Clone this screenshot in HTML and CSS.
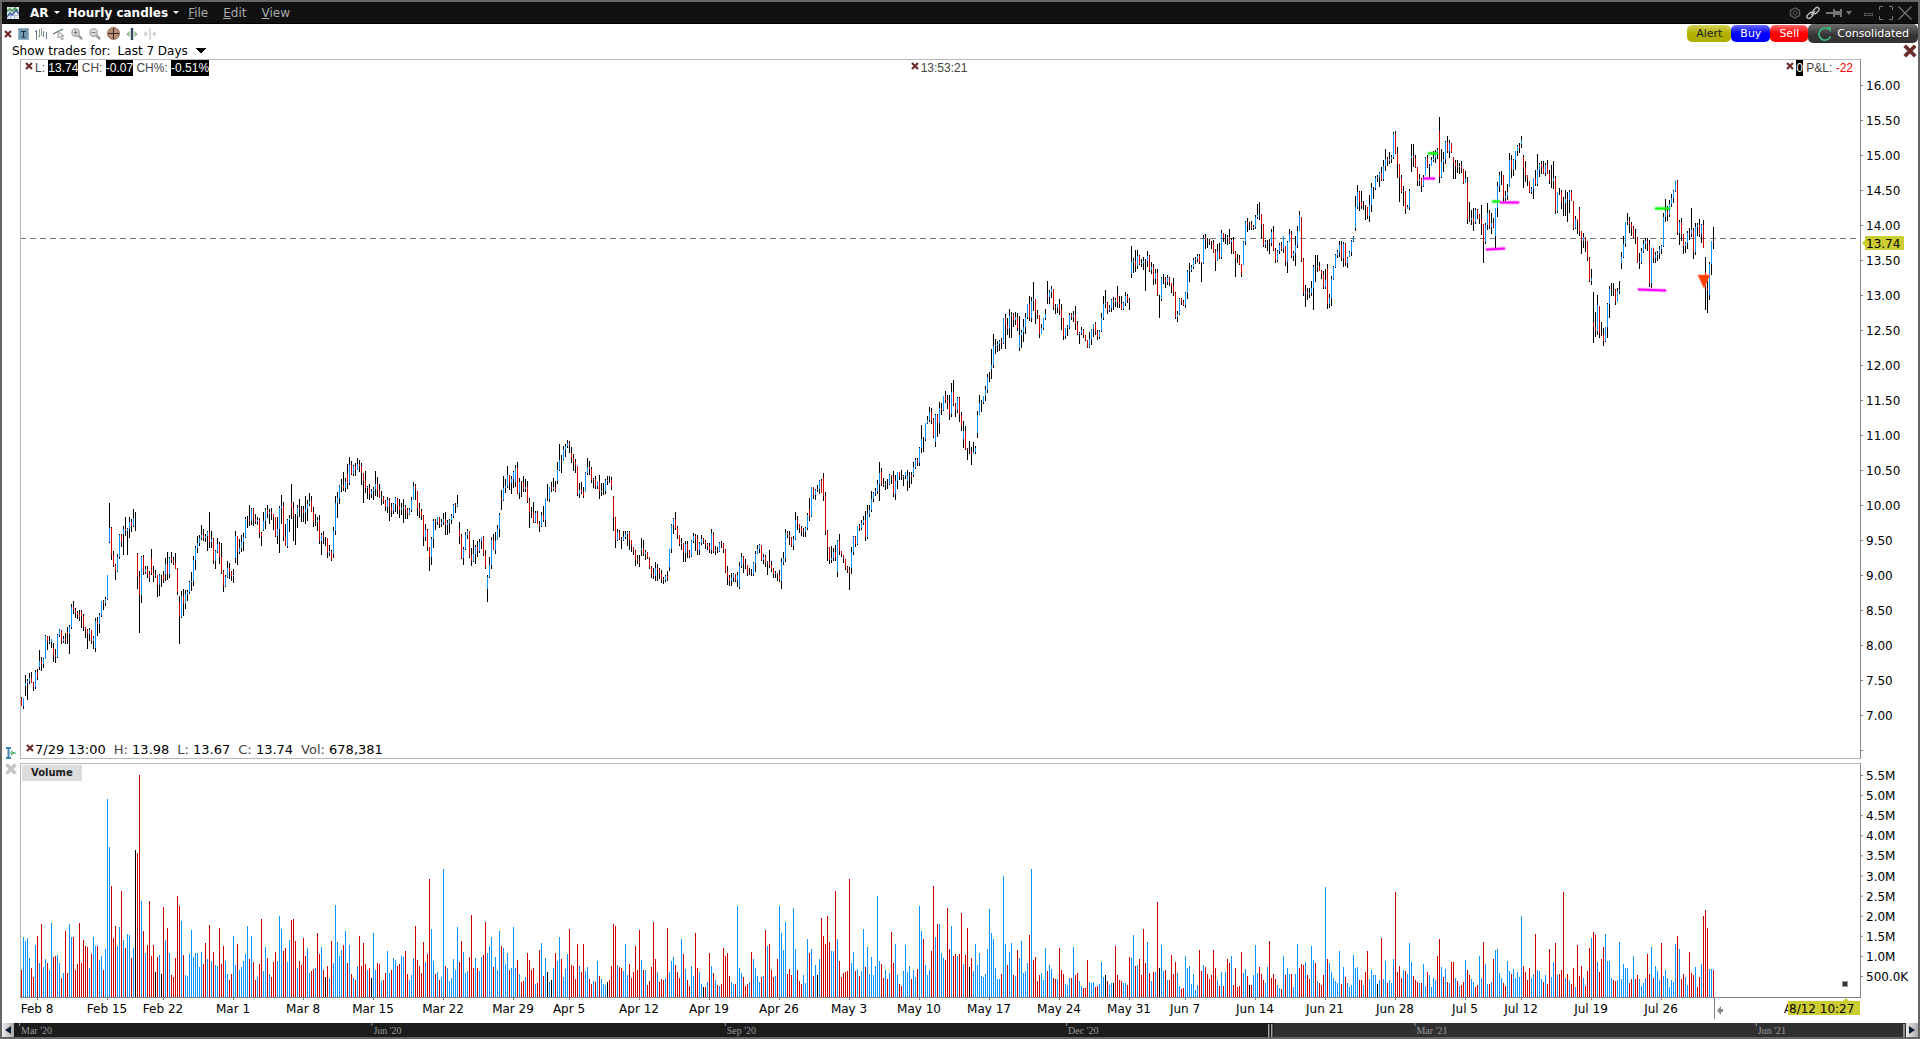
FILE: index.html
```
<!DOCTYPE html>
<html lang="en">
<head>
    <meta charset="UTF-8">
    <meta name="viewport" content="width=device-width, initial-scale=1.0">
    <title>AR - Hourly candles</title>
    <link rel="stylesheet" href="styles.css">
</head>
<body>
<header class="titlebar">
    <svg class="logo" width="12" height="12" viewBox="0 0 12 12">
        <rect width="12" height="12" fill="#e4e8f4"/>
        <path d="M3.5 0V12M7.5 0V12M0 4.5H12M0 8.5H12" stroke="#b4bcd8"/>
        <path d="M0 4L3 2L5 4L8 1L11 4" fill="none" stroke="#3a9c3a" stroke-width="1.5"/>
        <path d="M0 10L3 6L5 8L9 3L12 7" fill="none" stroke="#36589c" stroke-width="1.3"/>
    </svg>
    <button class="title-btn symbol">AR<span class="caret"></span></button>
    <button class="title-btn period">Hourly candles<span class="caret"></span></button>
    <nav class="menu">
        <a href="#"><u>F</u>ile</a>
        <a href="#"><u>E</u>dit</a>
        <a href="#"><u>V</u>iew</a>
    </nav>
    <div class="window-buttons">
        <button aria-label="Settings"><svg width="12" height="12" viewBox="0 0 12 12" fill="none" stroke="#555"><path d="M6 1L10.5 3.5V8.5L6 11L1.500 8.500V3.500Z" stroke-width="1.5"/><circle cx="6" cy="6" r="2"/></svg></button>
        <button aria-label="Link"><svg width="14" height="14" viewBox="0 0 14 14" fill="none" stroke="#bbb" stroke-width="1.400"><rect x="6.500" y="2.500" width="7" height="4" rx="2" transform="rotate(-45 10 4.500)"/><rect x=".5" y="7.500" width="7" height="4" rx="2" transform="rotate(-45 4 9.500)"/><path d="M5 9L9 5"/></svg></button>
        <button aria-label="Pin"><svg width="28" height="12" viewBox="0 0 28 12" fill="#777"><path d="M1 5H8V7H1ZM8 2H10V4H15V2H17V10H15V8H10V10H8Z"/><path d="M21 4H27L24 8Z"/></svg></button>
        <button aria-label="Minimize" class="minimize"><svg width="10" height="12" viewBox="0 0 10 12"><rect x=".5" y="6.500" width="8" height="2" fill="none" stroke="#555"/></svg></button>
        <button aria-label="Maximize"><svg width="14" height="14" viewBox="0 0 14 14"><path d="M.5 4V.5H4M10 .5H13.500V4M13.500 10V13.500H10M4 13.500H.5V10" fill="none" stroke="#777"/></svg></button>
        <button aria-label="Close window"><svg width="14" height="14" viewBox="0 0 14 14"><path d="M.5 .5L13.500 13.500M13.500 .5L.5 13.500" stroke="#777" stroke-width="1.200"/></svg></button>
    </div>
</header>

<svg class="defs" width="0" height="0" aria-hidden="true">
    <symbol id="x" viewBox="0 0 8 8"><path d="M1 1L7 7M7 1L1 7" stroke="currentColor" stroke-width="2.200"/></symbol>
</svg>

<div class="toolbar">
    <div class="tools">
        <button aria-label="Close toolbar"><svg class="x" width="8" height="8"><use href="#x"/></svg></button>
        <button aria-label="Text"><svg width="11" height="12" viewBox="0 0 11 12"><rect x=".5" y=".5" width="10" height="11" fill="#7098b0" stroke="#9cb4c4"/><path d="M3 3.500H8M5.500 3.500V9M4 9H7" stroke="#16303e" fill="none"/></svg></button>
        <button aria-label="Bars"><svg width="12" height="12" viewBox="0 0 12 12" fill="none"><path d="M1.500 2V12M8.500 3V9M11.500 4V11M0 3.500H2" stroke="#6c7c98"/><path d="M4.500 1V9M6.500 0V8M4 8.500H3" stroke="#84a884"/></svg></button>
        <button aria-label="Draw line"><svg width="12" height="12" viewBox="0 0 12 12"><path d="M0 6L10 1" stroke="#5c7474" stroke-width="1.300"/><path d="M5 3V10L7 8.500L9 12L10.500 11L8.500 8H11Z" fill="#e4e4e4" stroke="#8c8c8c" stroke-width=".8"/></svg></button>
        <button aria-label="Zoom in"><svg width="12" height="12" viewBox="0 0 13 13"><path d="M8 8L12 12" stroke="#999" stroke-width="2.500"/><circle cx="5" cy="5" r="4" fill="#ddd" stroke="#aaa" stroke-width="1.500"/><path d="M3 5H7M5 3V7" stroke="#666"/></svg></button>
        <button aria-label="Zoom out"><svg width="12" height="12" viewBox="0 0 13 13"><path d="M8 8L12 12" stroke="#999" stroke-width="2.500"/><circle cx="5" cy="5" r="4" fill="#ddd" stroke="#aaa" stroke-width="1.500"/><path d="M3 5H7" stroke="#666"/></svg></button>
        <button aria-label="Crosshair"><svg width="13" height="13" viewBox="0 0 13 13"><circle cx="6.500" cy="6.500" r="6" fill="#b89078" stroke="#94705c"/><path d="M6.500 1V12M1 6.500H12" stroke="#3c241c"/></svg></button>
        <button aria-label="Widen bars"><svg width="12" height="12" viewBox="0 0 12 12"><path d="M3.500 3V9L0 6ZM8.500 3V9L12 6Z" fill="#94b894"/><path d="M6 0V12" stroke="#344c58" stroke-width="2.500"/></svg></button>
        <button aria-label="Narrow bars"><svg width="12" height="12" viewBox="0 0 12 12"><path d="M.5 3L4 6L.5 9ZM11.500 3L8 6L11.500 9Z" fill="#ccc"/><path d="M6 0V12" stroke="#b4b4b4"/></svg></button>
    </div>
    <div class="orders">
        <button class="order alert">Alert</button>
        <button class="order buy">Buy</button>
        <button class="order sell">Sell</button>
        <button class="order consolidated">
            <svg width="16" height="16" viewBox="0 0 16 16"><path d="M13.500 10.500A6 6 0 1 1 11 3" fill="none" stroke="#3cb47c" stroke-width="1.800"/><path d="M9 1H14V6Z" fill="#3cb47c"/></svg>
            Consolidated
        </button>
    </div>
</div>

<div class="filter">
    <label for="trades">Show trades for:</label>
    <select id="trades">
        <option>Last 7 Days</option>
        <option>Last 30 Days</option>
    </select>
    <button class="close-chart" aria-label="Close chart"><svg class="x" width="14" height="14"><use href="#x"/></svg></button>
</div>

<main class="charts">
    <div class="gutter bottom">
        <svg width="10" height="12" viewBox="0 0 10 12"><path d="M0 1H5M0 11H5M2.500 1V11" stroke="#3c84b4" stroke-width="2"/><path d="M4 6H10M5 4L8 6L5 8" stroke="#2c9c5c" fill="none"/></svg>
    </div>
    <section class="panel price">
        <svg class="plot" viewBox="0 0 1839 698" preserveAspectRatio="none">
            <path d="M0 178.500H1839" stroke="#737373" stroke-dasharray="6 4" stroke-dashoffset="1"/>
            <g id="candles"></g>
            <g class="halo">
                <path class="green" d="M1408 93.500H1416M1472 141.500H1478M1635 148.500H1648"/>
                <path class="pink" d="M1403 118.500H1413M1466 189.500L1483 188.500M1480 142.500H1497M1618 229.500L1644 230.500"/>
            </g>
            <g class="trades">
                <path class="green" d="M1408 93.500H1416M1472 141.500H1478M1635 148.500H1648"/>
                <path class="pink" d="M1403 118.500H1413M1466 189.500L1483 188.500M1480 142.500H1497M1618 229.500L1644 230.500"/>
                <path d="M1677 215H1689L1683 228Z" fill="#ff3c00" stroke="#ff7c54" stroke-width=".6"/>
            </g>
        </svg>
        <div class="legend top">
            <p><svg class="x" width="8" height="8"><use href="#x"/></svg>L: <mark>13.74</mark> CH: <mark>-0.07</mark> CH%: <mark>-0.51%</mark></p>
            <p><svg class="x" width="8" height="8"><use href="#x"/></svg>13:53:21</p>
            <p><svg class="x" width="8" height="8"><use href="#x"/></svg><mark>0</mark> P&amp;L: <span class="loss">-22</span></p>
        </div>
        <div class="legend base">
            <svg class="x" width="8" height="8"><use href="#x"/></svg><b>7/29 13:00</b><span>H: <b>13.98</b></span><span>L: <b>13.67</b></span><span>C: <b>13.74</b></span><span>Vol: <b>678,381</b></span>
        </div>
    </section>
    <svg class="axis" id="priceAxis"></svg>

    <div class="gutter">
        <button aria-label="Close volume"><svg width="12" height="12" viewBox="0 0 8 8" color="#c4c4c4"><use href="#x"/></svg></button>
    </div>
    <section class="panel volume">
        <svg class="plot" viewBox="0 0 1839 233" preserveAspectRatio="none">
            <g id="volumes"></g>
            <rect x="1821.500" y="217.500" width="5" height="5" fill="#333" stroke="#999"/>
        </svg>
        <h2>Volume</h2>
    </section>
    <svg class="axis" id="volumeAxis"></svg>

    <svg class="dates" id="dateAxis"></svg>
</main>

<footer class="overview">
    <button aria-label="Scroll left"><svg width="12" height="12" viewBox="0 0 12 12"><path d="M3 6L9 2V10Z" fill="#0c1c34"/></svg></button>
    <svg class="range" id="range"></svg>
    <button aria-label="Scroll right"><svg width="12" height="12" viewBox="0 0 12 12"><path d="M9 6L3 2V10Z" fill="#0c1c34"/></svg></button>
</footer>

<script src="chart.js"></script>
</body>
</html>
```
FILE: styles.css
```
* {
    box-sizing: border-box;
}
body {
    margin: 0;
    height: 100vh;
    display: flex;
    flex-direction: column;
    border: 2px solid #666;
    background: #fff;
    color: #000;
    font-family: "DejaVu Sans", sans-serif;
    font-size: 12px;
    overflow: hidden;
}
button {
    display: flex;
    align-items: center;
    padding: 0;
    border: none;
    background: none;
    font: inherit;
    color: inherit;
    cursor: pointer;
}
svg {
    display: block;
}
.defs {
    position: absolute;
}
.x {
    color: #6c2c2c;
}

/* title bar */
.titlebar {
    display: flex;
    align-items: center;
    height: 22px;
    padding: 0 6px 0 5px;
    background: #111;
    border-bottom: 1px solid #000;
    color: #fff;
}
.title-btn {
    font-weight: bold;
}
.symbol {
    margin-left: 11px;
}
.period {
    margin-left: 8px;
}
.caret {
    margin-left: 5px;
    border: 3px solid transparent;
    border-top-color: #fff;
    border-bottom: none;
}
.menu {
    display: flex;
    gap: 15px;
    margin-left: 9px;
}
.menu a {
    color: #aaa;
    text-decoration: none;
}
.window-buttons {
    display: flex;
    align-items: center;
    gap: 5px;
    margin-left: auto;
}
.minimize {
    margin-left: 6px;
}

/* toolbar */
.toolbar {
    display: flex;
    justify-content: space-between;
    height: 19px;
    padding-left: 2px;
}
.tools,
.orders {
    display: flex;
    align-items: center;
}
.tools {
    gap: 6px;
}
.order {
    justify-content: center;
    height: 17px;
    padding: 0 9px;
    border-radius: 5px;
    color: #fff;
    font-size: 11px;
}
.alert {
    background: linear-gradient(#d4d45c, #b0b000 50%);
    color: #222;
}
.buy {
    background: linear-gradient(#6c6cff, #0000ff 50%);
}
.sell {
    background: linear-gradient(#ff6c6c, #ff0000 50%);
}
.consolidated {
    gap: 4px;
    height: 19px;
    background: linear-gradient(#707070, #333 60%);
}

/* trades filter */
.filter {
    display: flex;
    align-items: center;
    height: 16px;
    padding: 0 1px 0 10px;
}
select {
    width: 88px;
    margin-left: 7px;
    padding: 0;
    border: none;
    appearance: none;
    background: linear-gradient(to bottom right, #000 50%, transparent 50%) no-repeat 83px 4px / 5px 6px,
        linear-gradient(to bottom left, #000 50%, transparent 50%) no-repeat 78px 4px / 5px 6px;
    font: inherit;
}
.close-chart {
    margin-left: auto;
}

/* charts */
.charts {
    flex: 1;
    min-height: 0;
    display: grid;
    grid-template-columns: 18px 1fr 57px;
    grid-template-rows: minmax(0, 700fr) minmax(0, 235fr) 21px;
    row-gap: 4px;
}
.gutter {
    display: flex;
    justify-content: center;
    align-items: flex-start;
}
.gutter.bottom {
    align-items: flex-end;
}
.panel {
    position: relative;
    min-height: 0;
    border: 1px solid #b8b8b8;
    border-right-color: #888;
}
.volume {
    border-bottom-color: #808080;
}
.plot {
    width: 100%;
    height: 100%;
    shape-rendering: crispEdges;
}
.axis,
.dates {
    width: 100%;
    height: 100%;
    overflow: visible;
}
.dates {
    grid-column: 2;
    margin-top: -4px;
    height: 25px;
}
.tick {
    stroke: #808080;
}
.tag {
    fill: #cccc33;
}
.black {
    stroke: #000;
}
.blue {
    stroke: #0a94ff;
}
.red {
    stroke: #cc0000;
}
.trades,
.halo {
    fill: none;
    stroke-linecap: round;
    shape-rendering: auto;
}
.trades {
    stroke-width: 2;
}
.halo {
    stroke-width: 4;
    opacity: 0.3;
}
.green {
    stroke: #00ff00;
}
.pink {
    stroke: #ff00ff;
}
.legend {
    position: absolute;
    left: 4px;
    right: 7px;
    color: #444;
    line-height: 16px;
}
.legend.top {
    top: 0;
    display: grid;
    grid-template-columns: 1fr auto 1fr;
    font-family: "Liberation Sans", sans-serif;
}
.legend p {
    margin: 0;
}
.legend p:last-child {
    text-align: right;
}
.legend p .x {
    display: inline-block;
    margin: 0 2px 2px 0;
}
.legend.base {
    bottom: 0;
    left: 5px;
    display: flex;
    gap: 8px;
    font-size: 13px;
}
.legend.base .x {
    margin: 2px -7px 0 0;
}
.legend b {
    color: #000;
    font-weight: normal;
}
mark {
    display: inline-block;
    background: #000;
    color: #fff;
}
.legend .loss {
    color: #f00;
}
h2 {
    position: absolute;
    top: 1px;
    left: 1px;
    margin: 0;
    padding: 0 9px;
    background: #ddd;
    color: #222;
    font-size: 10px;
    line-height: 16px;
}

/* overview strip */
.overview {
    display: flex;
    height: 14px;
    background: #1c1c1c;
}
.overview button {
    width: 12px;
    background: linear-gradient(90deg, #eee, #a8a8a8);
}
.range {
    flex: 1;
    height: 14px;
    font-family: "Liberation Serif", serif;
    font-size: 10px;
    fill: #999;
}
```
FILE: chart.js
```
// high,low,close[,open] for each bar, measured down from the segment's base;
// the open is the previous close unless it is given
const candles = [
    { base: 380, bars: `
257,266,266,258 258,269,258 235,256,243,246 239,260,241 233,244,238 232,243,243 242,251,247
230,249,232 229,240,237 210,230,221,227 217,231,224 218,228,219 195,219,196 196,210,202
196,204,201 199,208,199,202 203,222,215,208 209,223,217 194,218,195 189,197,190 190,204,201
196,203,199 193,204,202 187,204,194,192 185,214,187 164,189,167 161,174,170 168,178,173
171,179,175 170,181,177 170,188,176,172 174,191,187 187,198,190 189,209,194 188,201,190
190,204,201 196,209,198 178,212,181,208 177,196,184 173,193,175 161,177,161 160,170,163
157,166,159 135,160,135 63,103,88,102 87,120,115 111,127,125 124,140,131 114,132,117
94,119,95 94,107,102 86,115,89,94 77,96,91 88,115,89 77,98,82 79,92,86
69,87,78 72,91,78 113,149,137,114 131,193,155 116,163,117 115,135,132 126,134,129
126,138,134 131,142,138 109,135,133,118 126,142,136 130,138,135 135,157,145 134,156,135
135,147,135 131,143,140 118,141,124,134 112,140,134 117,138,118 112,123,120 117,125,123
113,129,129 128,155,152 156,204,177,162 151,178,156 149,176,164 150,169,154 150,161,152
141,154,142 132,151,141 116,146,120 106,130,108 96,113,103 95,106,98 85,100,95
89,101,98 94,102,96 91,111,92 72,108,102 91,108,99 98,124,121 110,129,111
98,113,104 102,124,117 103,134,132 130,152,146 135,147,137 121,138,128 123,139,132
131,141,136 129,143,135 91,123,96,118 96,125,112 99,114,108 95,112,102 93,111,97
77,98,79 76,88,79 65,86,81 68,85,69 68,86,79 74,84,82 77,85,80
78,98,93 92,106,96 72,91,81,90 68,89,70 65,78,74 69,84,72 68,80,74
74,90,77 77,97,96 77,104,89 66,113,68 55,84,66 62,101,97 84,106,106
79,108,80 75,92,78 44,79,68,62 62,101,76 74,105,76 65,88,68 59,77,69
66,82,70 66,82,73 56,84,69 60,81,64 53,66,61 56,72,72 67,87,82
74,86,82 77,91,80 75,104,101 93,115,95 91,104,98 97,106,98 98,118,113
105,116,111 110,121,119 87,118,91,114 56,95,63 52,78,58 45,64,46 39,52,45
32,51,48 38,52,42 24,49,43,34 17,45,25 21,35,34 25,36,26 23,36,30
18,30,24 20,32,26 23,45,33 33,63,41 31,53,48 46,59,47 44,60,54
49,58,51 47,60,49 31,56,44 37,57,50 44,58,58 51,65,57 56,64,61
60,71,67 57,73,60 58,81,67 63,77,71 63,74,64 57,72,58 58,74,66
59,78,70 63,75,68 59,83,67 65,79,70 68,79,74 68,75,70 57,72,60
42,60,46 44,60,50 51,76,68 63,78,71 69,80,76 75,106,97 84,101,90
89,111,107 107,131,117 97,125,99 79,108,81 79,90,82 77,85,77 77,88,84
79,87,82 73,85,79 72,95,85 80,95,83 79,93,80 74,84,76 64,78,65
63,73,66 55,67,64 82,104,97,90 94,119,118 107,125,109 92,110,95 89,99,91
91,118,115 108,126,121 100,122,114 105,124,107 101,117,111 99,113,102` },
    { base: 360, bars: `
117,129,117,121 116,136,134 130,149,147 155,182,157,169 137,158,145 117,149,120 114,130,130
112,134,121 105,120,109 93,117,95 70,90,80,78 56,81,68 59,73,66 46,68,55
55,70,63 56,74,59 51,68,52 45,67,48,62 42,74,73 58,79,62 61,77,63
56,72,69 59,72,67 61,83,81 78,108,92 87,98,93 82,103,102 91,103,93
91,104,104 101,112,106 92,107,95 86,102,100 78,107,78 64,81,79 67,82,67
62,72,69 58,71,67 61,72,71 42,64,50,61 24,51,40 35,53,41 26,41,30
24,37,26 20,28,23 21,33,26 27,43,38,33 34,51,42 39,53,46 46,76,74
63,78,70 62,74,72 67,78,76 52,72,53 38,55,47 41,55,49 47,63,60
58,68,59 56,69,66 61,69,61 55,79,72 63,76,71 63,75,71 59,74,61
56,65,60 56,63,60 57,70,66 76,111,98,77 97,128,120 109,121,112 110,120,119
117,129,120 111,121,117 111,119,114 111,126,112 111,130,120 120,132,126 127,135,131
130,146,139 135,144,141 135,147,143 118,136,128,130 120,136,134 130,140,132 132,139,137
137,149,147 146,158,154 148,159,156 142,161,148 144,161,149 148,159,154 150,163,159
157,164,160 155,162,156 151,161,158 129,151,129,147 104,133,105 98,114,99 92,110,108
106,119,115 115,126,124 118,130,123 123,142,133 121,142,124 121,138,131 130,138,136
120,137,121 113,123,116 114,131,119 115,135,130 122,135,123 115,125,119 118,124,121
120,129,124 123,130,126 123,133,130 109,134,113 112,133,131 126,135,130 127,133,131
122,132,123 121,128,124 123,133,130 129,153,151 146,165,157 155,166,161 153,166,158
153,162,154 154,162,160 152,167,155 142,169,146,167 133,148,137 136,153,144 139,149,145
145,156,153 148,155,154 149,156,154 142,156,143 131,152,134 125,134,129 124,133,125
125,141,140 134,144,137 135,147,143 141,155,142 130,148,145 141,152,149 148,158,154
151,158,153 153,161,155 150,162,159 138,169,142,161 132,145,138 109,142,113 111,118,115
111,125,117 117,127,126 116,130,119 92,120,100 96,110,104 104,113,108 106,116,111
108,117,112 107,117,108 93,110,95 78,101,96,89 67,97,67 67,79,75 69,80,70
65,72,69 60,74,61 59,73,73 53,81,76,57 72,115,111 110,141,127 127,144,140
126,143,138 128,141,132 125,141,138 120,157,121,152 114,135,131 131,137,134 135,143,138
139,150,147 146,153,150 147,170,153 127,154,132,148 116,135,117 116,127,124 106,125,106
104,111,108 100,110,103 96,105,100 91,121,117 85,119,94 85,97,90 71,92,79
72,82,73 68,76,71 60,74,64 42,81,53` },
    { base: 160, bars: `
248,266,264,252 258,267,265 261,270,264 259,269,264 254,265,255 255,264,257 251,277,274
255,280,261 252,269,252 252,260,256 250,260,257 255,266,256 252,259,252 250,271,256,261
252,268,255 252,264,257 242,257,247,255 238,249,240 238,246,243 227,246,228 205,233,219
217,232,219 203,221,203 196,204,200 187,202,192 188,204,200 198,218,216 194,227,195,222
194,217,203 182,214,188 183,195,190 176,191,176 171,183,180 175,189,183 175,200,194
163,197,172 160,186,184 183,197,190 177,193,178 177,202,195 192,211,206 201,228,211,219
206,230,229 228,240,230 221,234,231 227,245,234 222,234,232 226,234,228 191,218,195,213
175,195,183 180,192,182 176,184,176 166,181,170 154,173,157 152,162,157 129,159,145,149
114,148,126 119,134,125 121,132,124 120,131,121 118,129,123 98,124,98 94,129,105
98,115,109 89,118,96 92,118,95 93,107,100 92,105,97 93,111,108 96,131,115,128
110,128,112 99,122,107 93,114,97 84,99,84 76,101,98 77,102,81 62,91,79
79,104,93 90,99,95 95,118,114 104,114,108 98,110,98 89,100,94 61,84,77,75
70,84,72 66,78,69 69,90,87 84,94,88 84,93,84 79,95,90 84,110,98
98,120,116 108,119,108 105,116,107 93,109,95 93,100,97 91,102,95 86,110,104
101,115,114 112,124,113 107,115,110 109,118,115 115,121,120 120,128,127 112,128,119
109,125,109 104,117,104 102,115,112 110,120,117 110,119,111 93,112,98 76,100,84
70,88,83 82,94,90 85,92,88 79,92,80 77,90,82 78,87,80 66,88,82,75
76,88,84 76,90,89 82,90,83 72,86,76 74,83,80 78,90,82 26,58,42,54
38,53,41 30,52,46 30,49,36 35,45,44 39,47,43 37,50,41 39,71,41
31,47,36 35,52,50 42,54,47 44,65,59 49,64,53 49,76,75 75,98,75
57,81,58,79 54,64,58 57,68,62 55,65,58 57,66,63 63,73,66 58,76,73
72,99,97 91,102,94 78,95,79 78,85,82 80,86,85 72,88,73 50,79,51
43,62,50 45,52,47 38,49,40 37,44,39 34,42,36 34,44,42 42,62,43
15,44,18 14,29,20 18,28,21 19,25,22 21,29,23 20,33,31 29,51,41
24,41,31 23,39,37 10,39,13 13,22,18 14,24,18 15,25,17 9,24,22
18,34,20 17,34,32 31,57,38 34,43,38 35,45,44 44,57,55 21,45,22
1,25,2 -2,12,5 2,10,5 1,10,8 5,10,7 -5,9,-3 -16,-1,-5
-18,0,-6 -6,18,5 4,27,25 20,28,22 20,31,22 19,34,23 9,26,12
6,31,30 28,43,40 30,42,31 23,34,25 22,31,29 16,33,16 26,46,42
21,53,22 9,22,14 11,38,36 31,41,33 16,46,25 6,28,11 -9,11,-5
-3,42,39 38,76,73 65,87,72 68,80,74 68,78,73 61,76,68 45,90,47
35,62,47 35,52,46 42,51,51` },
    { base: 40, bars: `
170,179,174,171 171,189,187 169,189,180 164,209,204,169 194,208,198 176,206,179 166,180,167
154,168,155 150,158,152 141,157,145 141,161,158 142,167,144 143,166,163 157,168,158
151,157,152 140,156,141 136,142,137 96,131,107,128 85,109,92 91,111,102 91,109,106
101,110,106 105,120,107 107,119,116 95,122,105 83,112,88 87,99,88 76,90,78
75,82,77 72,87,73 67,81,79 60,81,66 49,71,59 57,66,61 52,64,59
55,63,57 32,59,34 31,54,53 47,78,64 64,102,78 75,93,92 86,106,91
91,114,109 105,109,107 89,110,91 44,72,56,58 44,67,58 55,68,67 67,86,81
74,86,79 78,92,86 75,87,78 57,75,58 55,68,67 64,78,66 57,66,60
51,62,58 50,63,52 48,59,50 17,83,77,31 49,78,62 52,72,59 41,64,42
36,53,51 40,58,43 43,53,52 57,79,63 60,79,66 60,73,67 63,74,66
61,73,69 69,84,83 71,83,79 77,124,119,82 102,122,120 110,125,118 108,131,122
108,124,110 109,119,115 114,124,119 105,135,124 124,163,142 123,144,125 103,130,113
110,129,127 113,134,123 118,128,127 108,149,108,136 82,117,86 72,92,75 71,85,75
75,102,98 91,101,96 84,100,92 53,87,60 55,78,70 59,76,60 51,70,51
45,56,46 43,53,48 36,48,40,44 55,88,67,57 61,82,75 75,86,79 81,93,92
87,94,89 78,99,78 70,86,84 54,86,70 63,77,64 61,74,67 61,74,73
63,76,65 60,74,74 70,84,80 65,88,81 61,89,78 76,114,111 92,113,92
88,95,92 90,109,102 97,116,103 90,116,99 92,122,100 90,113,92 90,101,101
101,130,128 116,129,119 119,134,121 107,136,131,110 131,154,141 133,148,137 137,152,141
141,161,158 157,182,181 169,185,178 192,243,227,223 212,237,231 195,235,205 206,238,233
222,236,234 228,246,241 227,242,227 203,238,204 186,218,189 183,196,190 183,196,190
189,205,202 188,202,191 181,194,190 152,169,157,163 136,158,144 122,147,122 113,125,121
117,133,124 122,136,128 126,138,137 129,144,138 137,163,163 153,169,162 148,164,151
140,153,144 138,149,141 138,151,144 140,187,183 148,188,148 148,163,158 152,163,155
151,161,153 146,159,149 145,154,146 113,147,117 99,122,111 106,121,115 100,117,104
94,107,98 90,103,91 81,92,81 80,135,133 120,145,122 118,141,134 134,154,146
142,153,143 131,149,133 128,140,134 108,137,130 128,159,152 123,155,127 123,136,125
119,137,134 124,143,125 120,148,148 157,210,188,172 180,213,190 162,200,164,195 141,175,141
127,149,143` },
];

// r = down bar, b = up bar, k = unchanged
const volumes = [
    { start: 0, bars: `
r27 b60 b56 b59 b39 r29 r20 b52 r61 b34 r73 b30 b38 r34 b27 b74 r40 r41 b42 b34
r19 b24 r66 r24 b73 b60 r60 r27 r33 r74 r34 r57 r51 r50 b29 r43 b60 b51 r51 b37
b41 r27 b48 b198 b150 r111 r59 r71 b51 b70 r106 b57 r49 b63 b62 r39 b49 k147 r144 r222
b96 r66 b44 r52 r96 r41 r52 k25 r40 b42 k23 r90 b57 r69 b44 r22 r20 r39 r101 r91
b76 r42 b22 b21 b43 b67 b40 b44 b44 b30 b45 r33 r54 b38 r72 b36 r45 b32 b31 r69
r33 r51 b36 b23 r17 r23 b61 b32 r53 b27 b30 b36 b43 b71 r38 b61 r35 r17 b20 r33
r78 b26 b50 r39 b23 r20 r35 r45 b36 b81 b68 r46 r49 b35 b57 r77 r78 r56 b29 r36
r32 r59 r41 b49 b24 r26 r28 b29 r64 r43 b50 r27 k20 r31 b19 r56 b34 b92 b55 b41
b47 r52 b66 r34 b52 r23 b19 r17 b31 r61 r31 r54 r33 b27 r29 k19 b64 b27 r34 r33
b16 r17 r24 b46 b24 r27 b39 b37 r31 r33 b41 b40 r46 r23 b17 b22 b39 r71 r37 r31` },
    { start: 200, bars: `
r24 r55 b35 r43 r118 b68 b36 r23 b25 r17 b20 b128 r31 b29 b16 b19 b38 b27 b70 r35
r56 b45 b24 b26 r40 r82 r29 b39 r29 b26 b40 r42 r75 b44 b51 b60 r30 b40 b27 b66
r51 b49 b33 b44 r27 b29 b70 b29 r37 b23 r15 r16 b20 r44 r37 r27 r29 b13 r14 r47
b54 r21 b39 k25 b15 k17 b29 r44 b36 b60 r38 b20 b28 b43 r68 r32 r31 r18 r53 b31
r25 r53 b26 b30 r18 r13 b16 r15 b36 r21 b18 b13 b12 k15 r17 r31 r73 r71 b32 r30
r29 b26 b53 b22 r33 r19 r25 r51 r27 r67 b37 r27 b27 r12 r16 r30 r75 r38 b25 r15
r18 r17 b19 r69 b25 b36 b40 r32 r25 r19 b58 r43 b28 r17 r11 b31 b21 r64 r29 b25
b13 k10 r10 b15 r44 b31 r24 b17 r12 b11 r13 r49 r41 r44 r21 b15 b13 r13 b91 b29
b24 r20 r11 r13 b15 r45 b38 b29 b21 b15 r20 b21 r67 b51 r53 r27 r20 b21 r38 b91
b64 b47 b75 r23 r28 r22 b89 b48 r27 r16 r13 b22 b14 b58 r44 b48 r21 b32 k22 b38
r79 r61 r53 r81 r55 b46 b46 r106 b58 r36 r20 r24 r25 r26 r118 b34 b45 r26 b28 r21
b26 b68 r30 b50 b23 b40 b22 b31 b101 b36` },
    { start: 430, bars: `
r33 r19 b27 r18 b24 r65 r34 b53 b22 r13 r11 b26 b52 b25 b31 r18 b27 b20 r28 b91
b66 r58 b32 b22 b27 r46 r111 b60 r73 b73 b44 b39 r37 r89 r48 b71 r41 r43 b41 r43
r84 b33 r42 r69 k30 r39 b26 b53 b32 b44 b21 b20 b23 b48 b88 b64 b58 b29 b18 b18
r23 b121 b53 r32 b45 b54 r22 b21 r47 b39 b56 b24 b26 b34 r62 b128 r37 r40 r16 r22
b24 b17 b49 r26 b32 b28 r19 r18 b18 r49 r27 r23 b13 b12 b19 r19 b50 r22 r24 b16
b11 r9 r9 r37 b15 b14 b15 r10 r11 b13 b35 b20 k22 r16 b12 b14 k14 r51 r22 r17
r16 b14 b14 r12 r40 b39 b62 r31 b32 r38 r22 r68 r34 b55 r24 b16 r25 b25 r95 k29
b52 b26 r27 b17 r17 r42 r23 r35 b24 b11 r8 r9 b41 b29 b31 b13 b23 b7 b12 r47
r26 b32 r30 r23 r18 r22 r47 r29 b17 r11 b25 r11 b25 r38 r34 b41 r12 r29 r10 r11
r45 b24 b28 r21 k12 r12 b22 b52 b24 r30 r23 r17 b14 b30 r56 r19 r23 r18 b12 b9
r8 b41 r22 b29 b23 r23 b10 b23 b53 r29 r33 r32 b35 r22 r18 b51 b37 r34 b16 r14
r12 r22 b110 r38 b34 b25 b19 b16 b14 b46` },
    { start: 660, bars: `
r13 b30 r20 b14 b10 b12 b42 b29 b30 r17 r17 b12 r25 r46 b18 b27 b22 b22 k13 b17
r59 b18 b36 r14 b17 b14 b38 r105 r25 r31 r19 b27 r26 b23 b54 b35 r21 r17 r15 b14
r14 b33 b11 r25 b22 b10 b19 b17 r41 r58 b30 r20 b28 r15 b14 r35 r35 b19 r16 b11
r12 r15 b37 r27 r22 b18 b15 r10 r12 b41 b19 r55 b33 b13 r13 b15 r38 b47 b48 b24
b19 r14 r11 b36 b26 r23 b28 b19 b25 b20 b81 r31 r25 r17 r29 b19 b23 r63 b27 b26
b18 r15 b22 r13 r48 b20 b35 r54 b22 r23 r27 r105 b19 r23 b17 r13 r29 b10 r52 r21
r31 b19 r11 r26 r49 b59 r65 r62 b35 r25 r38 r50 b63 b36 b36 b19 r17 r16 b17 b55
b18 b33 b29 b29 r14 r18 b41 r18 r22 b18 b11 b14 b19 r43 r23 b50 r19 b31 b26 b17
r54 b21 b27 b19 b10 b17 b15 b53 r61 b48 r18 r23 b20 b12 r45 r24 r22 b30 r10 r20
b33 r81 r87 r69 b28 b28 r27` },
];

const dates = [
    ['Feb 8', 8], ['Feb 15', 43], ['Feb 22', 71], ['Mar 1', 106], ['Mar 8', 141], ['Mar 15', 176],
    ['Mar 22', 211], ['Mar 29', 246], ['Apr 5', 274], ['Apr 12', 309], ['Apr 19', 344], ['Apr 26', 379],
    ['May 3', 414], ['May 10', 449], ['May 17', 484], ['May 24', 519], ['May 31', 554], ['Jun 7', 582],
    ['Jun 14', 617], ['Jun 21', 652], ['Jun 28', 687], ['Jul 5', 722], ['Jul 12', 750], ['Jul 19', 785],
    ['Jul 26', 820],
];
const months = [["Mar '20", 5], ["Jun '20", 357], ["Sep '20", 710], ["Dec '20", 1051], ["Mar '21", 1399], ["Jun '21", 1740]];

const WIDTH = 1839;
const PRICE_HEIGHT = 698;
const VOLUME_HEIGHT = 233;

function drawPaths(id, paths) {
    document.getElementById(id).innerHTML = Object.keys(paths)
        .map(name => `<path class="${name}" d="${paths[name]}"/>`).join('');
}

function drawCandles() {
    const paths = { black: '', blue: '', red: '' };
    let i = 0;
    candles.forEach(segment => {
        let last = 0;
        segment.bars.trim().split(/\s+/).forEach(bar => {
            const [high, low, close, open = last] = bar.split(',').map(Number);
            const x = i * 2 + 0.5;
            // keep the body inside the wick
            const from = Math.min(Math.max(open, high), low);
            paths.black += `M${x} ${high + segment.base}V${low + segment.base}`;
            if (from !== close) {
                paths[close < from ? 'blue' : 'red'] += `M${x} ${from + segment.base}V${close + segment.base}`;
            }
            last = close;
            i++;
        });
    });
    drawPaths('candles', paths);
}

function drawVolumes() {
    const names = { k: 'black', b: 'blue', r: 'red' };
    const paths = { black: '', blue: '', red: '' };
    volumes.forEach(segment => {
        segment.bars.trim().split(/\s+/).forEach((bar, n) => {
            paths[names[bar[0]]] += `M${(segment.start + n) * 2 + 0.5} ${VOLUME_HEIGHT}v-${bar.slice(1)}`;
        });
    });
    drawPaths('volumes', paths);
}

function axisLabel(y, text) {
    return `<svg y="${y}%" overflow="visible"><path class="tick" d="M0 .5H2"/><text x="5" y="5">${text}</text></svg>`;
}

function drawAxes() {
    let html = '';
    for (let price = 16; price >= 6.5; price -= 0.5) {
        const y = (26 + (16 - price) * 70) / (PRICE_HEIGHT + 2) * 100;
        html += axisLabel(y, price < 7 ? '' : price.toFixed(2));
    }
    html += '<svg y="26.2857%" overflow="visible"><path class="tag" d="M1 0L4 -3V-7H43V7H4V3Z"/><text x="5" y="5">13.74</text></svg>';
    document.getElementById('priceAxis').innerHTML = html;

    html = '';
    for (let v = 0.5; v <= 5.5; v += 0.5) {
        const y = (213 - (v - 0.5) * 40.2) / (VOLUME_HEIGHT + 2) * 100;
        html += axisLabel(y, v === 0.5 ? '500.0K' : v.toFixed(1) + 'M');
    }
    document.getElementById('volumeAxis').innerHTML = html;

    const at = px => px / (WIDTH + 2) * 100;
    html = dates.map(([text, bar]) =>
        `<svg x="${at(bar * 2 + 1)}%" overflow="visible"><path class="tick" d="M.5 0V2"/><text y="15" text-anchor="middle">${text}</text></svg>`
    ).join('');
    html += `<svg x="${at(1694)}%" overflow="visible"><path class="tick" d="M.5 0V21"/><path d="M3 12.5L7 8V11H9V14H7V17Z" fill="#888"/></svg>`;
    html += `<svg x="${at(1768)}%" overflow="visible"><text x="-4" y="15">A</text><path class="tag" d="M0 3H55L58 0L61 3H72V17H0Z"/><text x="1" y="15">8/12 10:27</text></svg>`;
    document.getElementById('dateAxis').innerHTML = html;
}

function drawRange() {
    const at = px => px / 1890 * 100;
    let html = `<rect x="${at(1253)}%" width="${at(637)}%" height="14" fill="#303030"/>`;
    html += `<svg x="${at(1253)}%" overflow="visible"><path d="M0 0H5V14H0Z" fill="#111"/><path d="M.5 1V14M3.5 1V14" stroke="#eee"/></svg>`;
    html += `<svg x="${at(1888)}%" overflow="visible"><path d="M0 1V14" stroke="#eee"/></svg>`;
    html += months.map(([text, x]) =>
        `<svg x="${at(x)}%" overflow="visible"><path d="M.5 0V3" stroke="#999"/><text x="2" y="11">${text}</text></svg>`
    ).join('');
    document.getElementById('range').innerHTML = html;
}

drawCandles();
drawVolumes();
drawAxes();
drawRange();
```
